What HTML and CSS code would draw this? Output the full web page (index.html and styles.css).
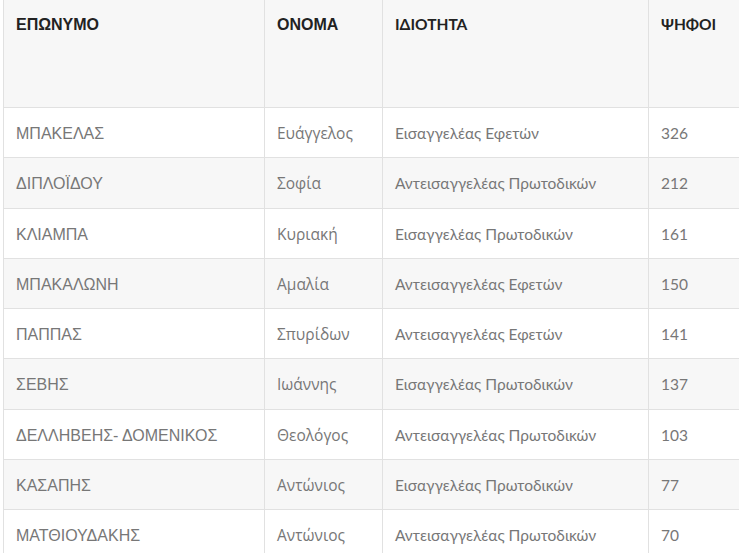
FILE: index.html
```html
<!DOCTYPE html>
<html lang="el">
<head>
<meta charset="utf-8">
<link rel="stylesheet" href="styles.css">
</head>
<body>
<table class="results">
  <colgroup>
    <col class="c1"><col class="c2"><col class="c3"><col class="c4">
  </colgroup>
  <thead>
    <tr>
      <th class="sans">ΕΠΩΝΥΜΟ</th>
      <th class="sans">ΟΝΟΜΑ</th>
      <th class="lato">ΙΔΙΟΤΗΤΑ</th>
      <th class="lato">ΨΗΦΟΙ</th>
    </tr>
  </thead>
  <tbody>
    <tr><td class="sans">ΜΠΑΚΕΛΑΣ</td><td class="open">Ευάγγελος</td><td class="lato">Εισαγγελέας Εφετών</td><td class="lato">326</td></tr>
    <tr><td class="sans">ΔΙΠΛΟΪΔΟΥ</td><td class="open">Σοφία</td><td class="lato">Αντεισαγγελέας Πρωτοδικών</td><td class="lato">212</td></tr>
    <tr><td class="sans">ΚΛΙΑΜΠΑ</td><td class="open">Κυριακή</td><td class="lato">Εισαγγελέας Πρωτοδικών</td><td class="lato">161</td></tr>
    <tr><td class="sans">ΜΠΑΚΑΛΩΝΗ</td><td class="open">Αμαλία</td><td class="lato">Αντεισαγγελέας Εφετών</td><td class="lato">150</td></tr>
    <tr><td class="sans">ΠΑΠΠΑΣ</td><td class="open">Σπυρίδων</td><td class="lato">Αντεισαγγελέας Εφετών</td><td class="lato">141</td></tr>
    <tr><td class="sans">ΣΕΒΗΣ</td><td class="open">Ιωάννης</td><td class="lato">Εισαγγελέας Πρωτοδικών</td><td class="lato">137</td></tr>
    <tr><td class="sans">ΔΕΛΛΗΒΕΗΣ- ΔΟΜΕΝΙΚΟΣ</td><td class="open">Θεολόγος</td><td class="lato">Αντεισαγγελέας Πρωτοδικών</td><td class="lato">103</td></tr>
    <tr><td class="sans">ΚΑΣΑΠΗΣ</td><td class="open">Αντώνιος</td><td class="lato">Εισαγγελέας Πρωτοδικών</td><td class="lato">77</td></tr>
    <tr><td class="sans">ΜΑΤΘΙΟΥΔΑΚΗΣ</td><td class="open">Αντώνιος</td><td class="lato">Αντεισαγγελέας Πρωτοδικών</td><td class="lato">70</td></tr>
  </tbody>
</table>
</body>
</html>
```
FILE: styles.css
```css
html, body {
  margin: 0;
  padding: 0;
  background: #ffffff;
  overflow: hidden;
}
body {
  padding-left: 3px;
  font-family: "Liberation Sans", Arial, sans-serif;
  font-size: 16px;
  color: #777777;
}
.results {
  border-collapse: collapse;
  table-layout: fixed;
  width: 780px;
  border-left: 1px solid #e1e1e1;
}
.c1 { width: 261px; }
.c2 { width: 118px; }
.c3 { width: 266px; }
.c4 { width: 135px; }
.results th,
.results td {
  border: 1px solid #e1e1e1;
  border-top: none;
  padding: 13px 12px 11px 12px;
  line-height: 25.25px;
  text-align: left;
  white-space: nowrap;
}
.results th {
  height: 84px;
  padding-top: 12px;
  padding-bottom: 11px;
  vertical-align: top;
  background: #f7f7f7;
  color: #222222;
  font-weight: bold;
}
.results td {
  vertical-align: middle;
}
.results tbody tr:nth-child(even) td {
  background: #f7f7f7;
}
.sans { font-family: "Liberation Sans", Arial, sans-serif; }
.open { font-family: "Open Sans", sans-serif; font-size: 15.5px; }
.lato { font-family: Lato, "Open Sans", sans-serif; font-size: 15.5px; }
```
